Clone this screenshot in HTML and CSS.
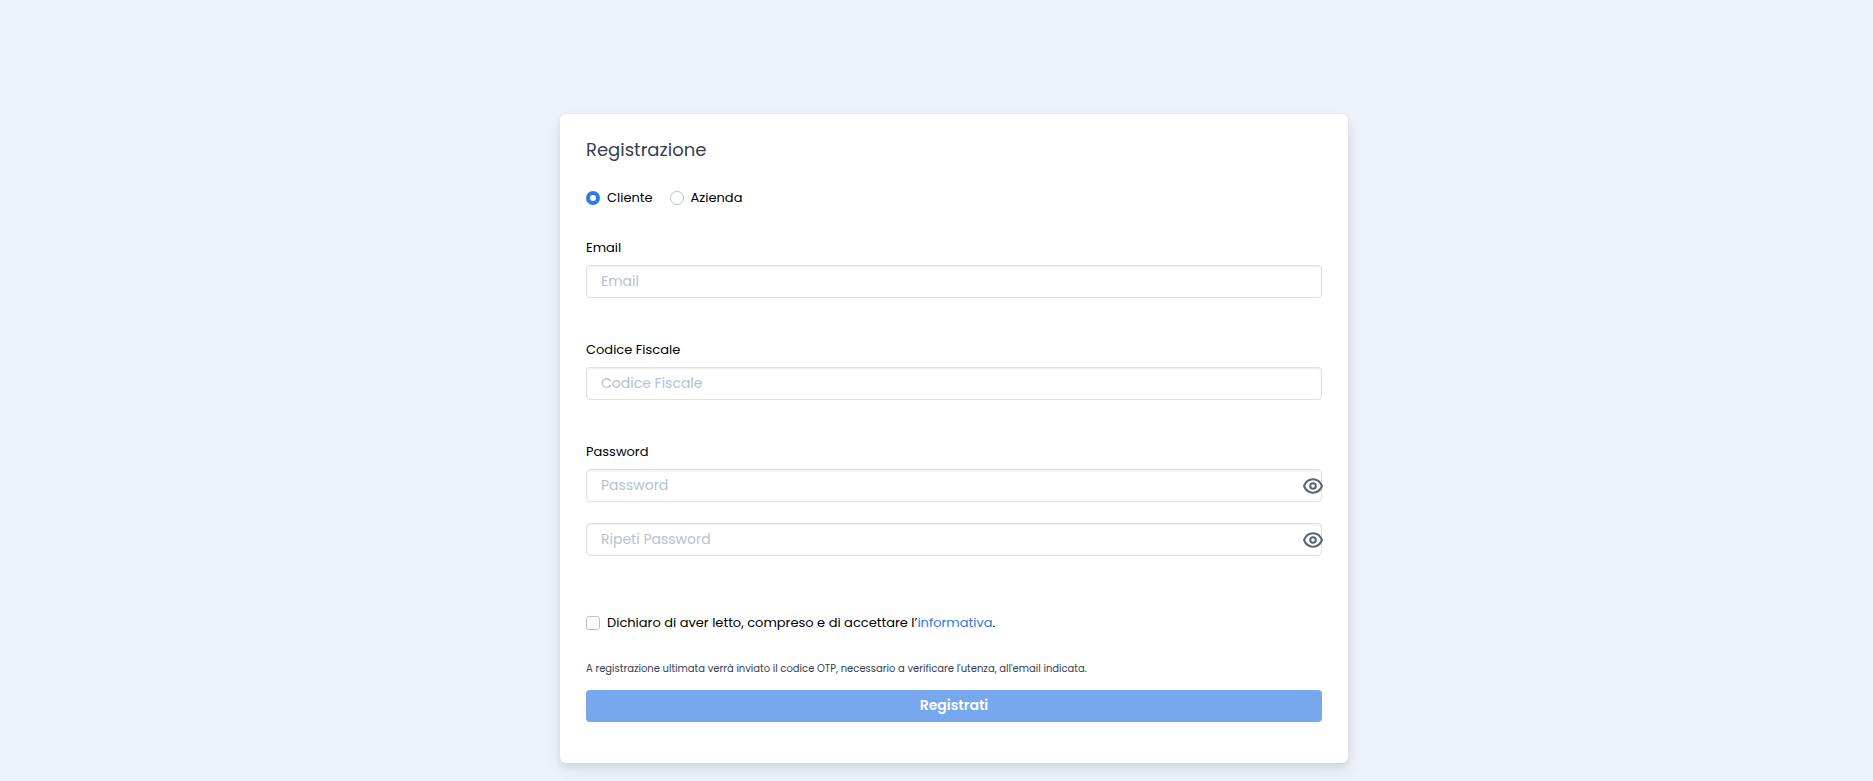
FILE: index.html
```html
<!DOCTYPE html>
<html lang="it">
<head>
<meta charset="utf-8">
<meta name="viewport" content="width=device-width, initial-scale=1">
<title>Registrazione</title>
<link rel="stylesheet" href="styles.css">
</head>
<body>
<main class="page">
  <form class="card">
    <h1 class="title">Registrazione</h1>
    <div class="types">
      <label class="choice"><input class="radio" type="radio" name="tipo" checked>Cliente</label>
      <label class="choice"><input class="radio" type="radio" name="tipo">Azienda</label>
    </div>
    <div class="field">
      <label class="label" for="email">Email</label>
      <input class="input" id="email" type="email" placeholder="Email">
    </div>
    <div class="field">
      <label class="label" for="cf">Codice Fiscale</label>
      <input class="input" id="cf" type="text" placeholder="Codice Fiscale">
    </div>
    <div class="field">
      <label class="label" for="pw">Password</label>
      <div class="secret">
        <input class="input" id="pw" type="password" placeholder="Password">
        <button class="eye" type="button" aria-label="Mostra password">
          <svg viewBox="0 0 20 16" width="20" height="16" fill="none" stroke="currentColor" stroke-width="2"><path d="M1 8C2.700 3.800 6 1.300 10 1.300S17.300 3.800 19 8c-1.700 4.200-5 6.700-9 6.700S2.700 12.200 1 8Z" stroke-linejoin="round"/><circle cx="10" cy="8" r="2.800"/></svg>
        </button>
      </div>
      <div class="secret repeat">
        <input class="input" type="password" placeholder="Ripeti Password" aria-label="Ripeti Password">
        <button class="eye" type="button" aria-label="Mostra password ripetuta">
          <svg viewBox="0 0 20 16" width="20" height="16" fill="none" stroke="currentColor" stroke-width="2"><path d="M1 8C2.700 3.800 6 1.300 10 1.300S17.300 3.800 19 8c-1.700 4.200-5 6.700-9 6.700S2.700 12.200 1 8Z" stroke-linejoin="round"/><circle cx="10" cy="8" r="2.800"/></svg>
        </button>
      </div>
    </div>
    <div class="consent">
      <input class="check" id="consent" type="checkbox">
      <label for="consent">Dichiaro di aver letto, compreso e di accettare l’<a class="link" href="#informativa">informativa</a>.</label>
    </div>
    <p class="note">A registrazione ultimata verrà inviato il codice OTP, necessario a verificare l'utenza, all'email indicata.</p>
    <button class="submit" type="submit" disabled>Registrati</button>
  </form>
</main>
</body>
</html>
```
FILE: styles.css
```css
* { box-sizing: border-box; }

body {
  margin: 0;
  min-height: 100vh;
  background: #edf2f9;
  color: #344050;
  font-family: Poppins, Inter, sans-serif;
  font-size: 14px;
}

.page {
  display: flex;
  justify-content: center;
  padding: 114px 0 18px 35px;
}

.card {
  flex: 0 1 788px;
  padding: 24px 26px 41px;
  border-radius: 6px;
  background: #fff;
  box-shadow: 0 7px 14px 0 rgba(65, 69, 88, 0.1), 0 3px 6px 0 rgba(0, 0, 0, 0.07);
}

.title {
  margin: 0;
  font-size: 18px;
  font-weight: 400;
  line-height: 24px;
}

.types {
  display: flex;
  gap: 17px;
  margin-top: 26px;
}

.choice,
.consent {
  display: flex;
  align-items: center;
  gap: 7px;
  color: #000;
  font-size: 13px;
  line-height: 20px;
}

.radio,
.check {
  flex: none;
  appearance: none;
  width: 14px;
  height: 14px;
  margin: 0;
  border: 1px solid #b6c1d2;
  background: #fff;
}

.radio { border-radius: 50%; }
.radio:checked { border: 4px solid #2c7be5; }
.check { border-radius: 3px; }

.field { margin-top: 30px; }
.field + .field { margin-top: 42px; }

.label {
  display: block;
  margin-bottom: 7px;
  color: #000;
  font-size: 13px;
  line-height: 20px;
}

.input {
  display: block;
  width: 100%;
  height: 33px;
  padding: 0 14px;
  border: 1px solid #d8e2ef;
  border-radius: 4px;
  background: #fff;
  box-shadow: inset 0 1px 2px rgba(0, 0, 0, 0.075);
  color: #344050;
  font: inherit;
}

.input::placeholder { color: #b6c1d2; opacity: 1; }

.secret { position: relative; }
.repeat { margin-top: 21px; }

.eye {
  position: absolute;
  top: 9px;
  right: -1px;
  display: flex;
  padding: 0;
  border: 0;
  background: none;
  color: #5a6478;
}

.consent { margin-top: 57px; }

.link { color: #2c7be5; text-decoration: none; }

.note {
  margin: 28px 0 13px;
  font-size: 10px;
  line-height: 16px;
}

.submit {
  display: block;
  width: 100%;
  height: 32px;
  padding: 0 0 2px;
  border: 0;
  border-radius: 4px;
  background: #77a8ee;
  color: #fff;
  font: inherit;
  font-weight: 600;
}
```
